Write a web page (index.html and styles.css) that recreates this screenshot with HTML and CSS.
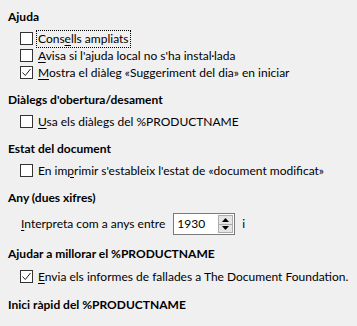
FILE: index.html
```html
<!DOCTYPE html>
<html>
<head>
    <meta charset="utf-8"/>
    <title>Opcions generals</title>
    <link rel="stylesheet" href="styles.css">
</head>
<body>
<div class="page">
    <div class="section">
        <div class="head">Ajuda</div>
        <label class="row"><span class="box"></span><span class="txt focus">Cons<u>e</u>lls ampliats</span></label>
        <label class="row"><span class="box"></span><span class="txt"><u>A</u>visa si l'ajuda local no s'ha instal·lada</span></label>
        <label class="row"><span class="box checked"><svg width="11" height="11" viewBox="0 0 11 11"><path d="M1.5 5.5 L4.3 8.5 L9.5 2" fill="none" stroke="#222" stroke-width="1"/></svg></span><span class="txt"><u>M</u>ostra el diàleg «Suggeriment del dia» en iniciar</span></label>
    </div>
    <div class="section">
        <div class="head">Diàlegs d'obertura/desament</div>
        <label class="row"><span class="box"></span><span class="txt"><u>U</u>sa els diàlegs del %PRODUCTNAME</span></label>
    </div>
    <div class="section">
        <div class="head">Estat del document</div>
        <label class="row"><span class="box"></span><span class="txt">En im<u>p</u>rimir s'estableix l'estat de «document modificat»</span></label>
    </div>
    <div class="section">
        <div class="head">Any (dues xifres)</div>
        <div class="row spinrow">
            <span class="txt"><u>I</u>nterpreta com a anys entre</span>
            <span class="spin">
                <span class="val">1930</span>
                <span class="btns">
                    <span class="btn"><svg width="7" height="4" viewBox="0 0 7 4"><path d="M0 4 L3.5 0 L7 4 Z" fill="#000"/></svg></span>
                    <span class="btn"><svg width="7" height="4" viewBox="0 0 7 4"><path d="M0 0 L3.5 4 L7 0 Z" fill="#000"/></svg></span>
                </span>
            </span>
            <span class="txt">i</span>
        </div>
    </div>
    <div class="section report">
        <div class="head">Ajudar a millorar el %PRODUCTNAME</div>
        <label class="row"><span class="box checked"><svg width="11" height="11" viewBox="0 0 11 11"><path d="M1.5 5.5 L4.3 8.5 L9.5 2" fill="none" stroke="#222" stroke-width="1"/></svg></span><span class="txt"><u>E</u>nvia els informes de fallades a The Document Foundation.</span></label>
    </div>
    <div class="section">
        <div class="head">Inici ràpid del %PRODUCTNAME</div>
    </div>
</div>
</body>
</html>
```

FILE: styles.css
```css
*{ padding:0; margin:0; box-sizing:border-box; }
html, body{ background:#f0f0f0; }
body{ font-family:"Lato", "Noto Sans", sans-serif; font-size:12px; color:#000; }
.page{ padding:8px 0 0 8px; }
.section{ margin-bottom:10px; }
.head{ font-weight:bold; line-height:17px; height:17px; }
.row{ display:flex; align-items:center; height:17px; margin-left:12px; }
.head + .row{ margin-top:5px; }
.report .head + .row{ margin-top:6px; }
.report{ margin-bottom:11px; }
.box{ width:13px; height:13px; border:1px solid #333; background:#fff; display:flex; align-items:center; justify-content:center; margin-right:5px; flex:none; }
.txt{ line-height:16px; white-space:nowrap; }
.txt u{ text-decoration:underline; text-underline-offset:2px; }
.focus{ outline:1px dotted #000; outline-offset:0; padding:0 1px; margin-left:-1px; }
.spinrow{ height:22px; padding-left:1px; }
.head + .spinrow{ margin-top:7px; }
.spin{ display:flex; align-items:center; width:62px; height:22px; border:1px solid #7a7a7a; background:#fff; margin:0 7px 0 8px; }
.val{ flex:1; padding-left:3px; line-height:20px; }
.btns{ display:flex; flex-direction:column; width:15px; height:18px; margin-right:1px; }
.btn{ flex:1; display:flex; align-items:center; justify-content:center; background:#e5e5e5; border:1px solid #adadad; }
.btn + .btn{ border-top:none; }
```
